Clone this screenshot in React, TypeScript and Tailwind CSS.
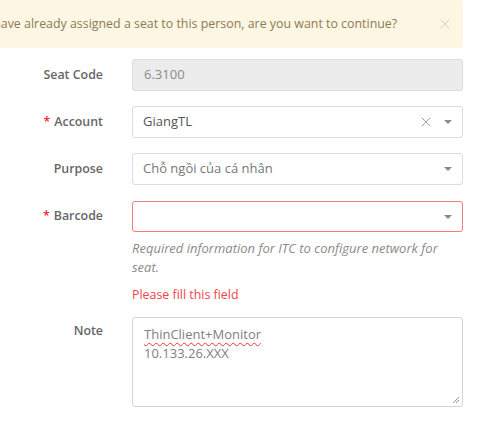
import { X } from "lucide-react";

function Caret() {
  return (
    <svg width="8" height="4" viewBox="0 0 8 4" className="shrink-0">
      <path d="M0 0h8L4 4z" fill="#8a8a8a" />
    </svg>
  );
}

function Row({ label, required, children, top }: { label: string; required?: boolean; children: React.ReactNode; top?: boolean }) {
  return (
    <div className={`flex ${top ? "items-start" : "items-center"}`}>
      <div className={`w-[103px] shrink-0 text-right text-[12.4px] font-semibold text-[#666] ${top ? "pt-[5px]" : ""}`}>
        {required && <span className="mr-[4px] text-[#f5222d]">*</span>}
        {label}
      </div>
      <div className="ml-[29px] w-[331px]">{children}</div>
    </div>
  );
}

export default function App() {
  return (
    <div className="h-[426px] w-[481px] overflow-hidden bg-white text-[13px] text-[#666]" style={{ fontFamily: '"Open Sans", sans-serif' }}>
      <div className="-ml-[60px] flex h-[48px] w-[523px] items-center justify-between rounded-[4px] bg-[#fdf6e2] pl-[28px] pr-[10px] text-[12.4px] text-[#8c7a57]">
        <span>You have already assigned a seat to this person, are you want to continue?</span>
        <X size={16} strokeWidth={1.2} className="text-[#cfc6ae]" />
      </div>

      <div className="mt-[11px] flex flex-col">
        <Row label="Seat Code">
          <div className="flex h-[32px] items-center rounded-[3px] border border-[#dcdcdc] bg-[#ececec] px-[11px] text-[#8a8a8a]">6.3100</div>
        </Row>
        <div className="h-[15px]" />
        <Row label="Account" required>
          <div className="flex h-[32px] items-center rounded-[3px] border border-[#dcdcdc] bg-white pl-[10px] pr-[10px] text-[#555]">
            <span className="flex-1">GiangTL</span>
            <X size={16} strokeWidth={1.2} className="mr-[10px] text-[#8a8a8a]" />
            <Caret />
          </div>
        </Row>
        <div className="h-[15px]" />
        <Row label="Purpose">
          <div className="flex h-[32px] items-center rounded-[3px] border border-[#dcdcdc] bg-white pl-[10px] pr-[10px] text-[#777]">
            <span className="flex-1">Chỗ ngồi của cá nhân</span>
            <Caret />
          </div>
        </Row>
        <div className="h-[16px]" />
        <Row label="Barcode" required>
          <div className="flex h-[31px] items-center rounded-[3px] border border-[#f57c7c] bg-white pl-[10px] pr-[10px]">
            <span className="flex-1" />
            <Caret />
          </div>
        </Row>
        <div className="ml-[132px] mt-[7px] w-[320px] text-[13px] italic leading-[19px] text-[#8a8a8a]">
          Required information for ITC to configure network for seat.
        </div>
        <div className="ml-[132px] mt-[8px] text-[12.4px] leading-[19px] text-[#f5424b]">Please fill this field</div>
        <div className="h-[13px]" />
        <Row label="Note" top>
          <div className="relative h-[90px] rounded-[3px] border border-[#d4d4d4] bg-white px-[11px] pt-[7px] leading-[19px] text-[#808080]">
            <div>
              <span className="underline decoration-[#e33] decoration-wavy decoration-[1px] underline-offset-[3px]">ThinClient+Monitor</span>
            </div>
            <div>10.133.26.XXX</div>
            <svg width="8" height="8" viewBox="0 0 8 8" className="absolute bottom-[2px] right-[2px]">
              <path d="M7 1L1 7M7 4L4 7" stroke="#999" strokeWidth="1" />
            </svg>
          </div>
        </Row>
      </div>
    </div>
  );
}
